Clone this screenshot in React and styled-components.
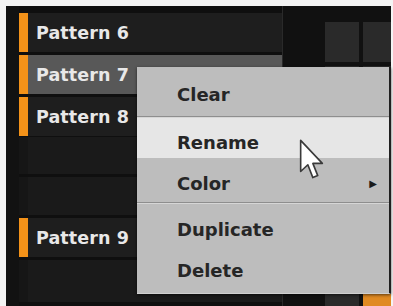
import React from 'react'
import styled, { createGlobalStyle } from 'styled-components'

const GlobalStyle = createGlobalStyle`
  html, body { margin: 0; padding: 0; background: #ffffff; }
  * { box-sizing: border-box; }
`

const Frame = styled.div`
  position: relative;
  width: 393px;
  height: 306px;
  padding: 6px 2px 0 6px;
  background: #f4f4f4;
  overflow: hidden;
  font-family: "DejaVu Sans", "Liberation Sans", sans-serif;
  font-weight: bold;
`

const Panel = styled.div`
  display: flex;
  height: 100%;
  background: #151515;
`

const LeftStrip = styled.div`
  width: 13px;
  background: #121212;
`

const List = styled.div`
  width: 263px;
  display: flex;
  flex-direction: column;
  padding-top: 7px;
  background: #0f0f0f;
`

const Row = styled.div`
  display: flex;
  height: ${p => p.$h || 39}px;
  margin-bottom: ${p => p.$gap ?? 3}px;
  background: ${p => (p.$active ? '#585858' : p.$empty ? '#1a1a1a' : '#1e1e1e')};
`

const Bar = styled.div`
  width: 9px;
  flex: none;
  background: ${p => (p.$on ? '#f39219' : '#161616')};
`

const Label = styled.div`
  display: flex;
  align-items: center;
  padding-left: 8px;
  font-size: 17.5px;
  color: #e8e8e8;
  letter-spacing: 0.1px;
`

const Right = styled.div`
  flex: 1;
  overflow: hidden;
  background: #111111;
  border-left: 1px solid #2a2a2a;
`

const Pads = styled.div`
  display: grid;
  grid-template-columns: 34px 34px;
  grid-auto-rows: 40px;
  gap: 4px;
  padding: 16px 0 0 42px;
`

const Pad = styled.div`
  background: ${p => (p.$lit ? '#e08a22' : '#2a2a2a')};
`

const Menu = styled.div`
  position: absolute;
  left: 137px;
  top: 67px;
  width: 254px;
  height: 227px;
  background: #bdbdbd;
  border-right: 2px solid #202020;
  border-bottom: 1px solid #d0d0d0;
  box-shadow: 0 1px 3px rgba(0, 0, 0, 0.6);
`

const Item = styled.div`
  display: flex;
  align-items: center;
  justify-content: space-between;
  height: ${p => p.$h}px;
  padding: ${p => p.$pt}px 12px 0 40px;
  font-size: 18px;
  color: #262626;
  background: ${p => (p.$hover ? '#e6e6e6' : 'transparent')};
`

const Separator = styled.div`
  height: 2px;
  border-top: 1px solid #8e8e8e;
  border-bottom: 1px solid #d6d6d6;
`

const Caret = styled.span`
  font-size: 10px;
  color: #1a1a1a;
`

const Cursor = styled.svg`
  position: absolute;
  left: 299px;
  top: 139px;
  width: 25px;
  height: 42px;
`

const patterns = [
  { name: 'Pattern 6' },
  { name: 'Pattern 7', active: true },
  { name: 'Pattern 8' },
  { empty: true, h: 37 },
  { empty: true, h: 38 },
  { name: 'Pattern 9' },
  { empty: true, h: 42 }
]

export default function App () {
  return (
    <Frame>
      <GlobalStyle />
      <Panel>
        <LeftStrip />
        <List>
          {patterns.map((p, i) => (
            <Row key={i} $active={p.active} $empty={p.empty} $h={p.h} $gap={i === 2 ? 1 : 3}>
              <Bar $on={!p.empty} />
              {p.name && <Label>{p.name}</Label>}
            </Row>
          ))}
        </List>
        <Right>
          <Pads>
            {Array.from({ length: 14 }).map((_, i) => (
              <Pad key={i} $lit={i === 13} />
            ))}
          </Pads>
        </Right>
      </Panel>
      <Menu>
        <Item $h={49} $pt={6}>Clear</Item>
        <Separator />
        <Item $h={40} $pt={9} $hover>Rename</Item>
        <Item $h={44} $pt={6}>Color<Caret>▶</Caret></Item>
        <Separator />
        <Item $h={45} $pt={5}>Duplicate</Item>
        <Item $h={43} $pt={0}>Delete</Item>
      </Menu>
      <Cursor viewBox="0 0 18 31">
        <path
          d="M1 1 L1 24 L6.3 19 L10 28.5 L13.6 27 L10 18 L17 18 Z"
          fill="#ffffff"
          stroke="#3a3a3a"
          strokeWidth="1.2"
          strokeLinejoin="round"
        />
      </Cursor>
    </Frame>
  )
}
